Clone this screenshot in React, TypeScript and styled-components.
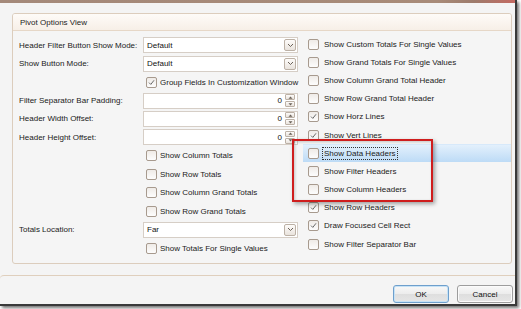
import React from "react";
import styled, { createGlobalStyle, css } from "styled-components";

const GlobalStyle = createGlobalStyle`
  html, body { margin: 0; padding: 0; background: #ffffff; }
  body { font-family: "Liberation Sans", Arial, sans-serif; }
  * { box-sizing: border-box; }
`;

const Page = styled.div`
  position: relative;
  width: 521px;
  height: 309px;
  overflow: hidden;
  background: #ffffff;
`;

const Window = styled.div`
  width: 517px;
  height: 306px;
  background: #f4f4f4;
  border-right: 2px solid #3a3a3a;
  border-bottom: 2px solid #3a3a3a;
  box-shadow: 2px 2px 3px rgba(0, 0, 0, 0.55);
  display: flex;
  flex-direction: column;
`;

const Frame = styled.div`
  height: 3px;
  flex: none;
  background: linear-gradient(to right, #a4897a 0%, #a88b79 85%, #9d7b6c 92%, #c46a62 100%);
`;

const Content = styled.div`
  padding: 10px 3px 0 12px;
`;

const GroupBox = styled.div`
  height: 251px;
  border: 1px solid #dccdbd;
  border-radius: 3px;
  background: #f5f5f5;
  display: flex;
  flex-direction: column;
`;

const GroupHeader = styled.div`
  height: 17px;
  flex: none;
  padding-left: 7px;
  display: flex;
  align-items: center;
  font-size: 8px;
  color: #1c1c1c;
  background: linear-gradient(#fefbf8, #f7efe7);
  border-bottom: 1px solid #e6d7c7;
  border-radius: 2px 2px 0 0;
`;

const GroupBody = styled.div`
  display: grid;
  grid-template-columns: 279px 1fr;
  column-gap: 5px;
  padding-left: 6px;
`;

const LeftColumn = styled.div`
  margin-top: 5px;
  display: grid;
  grid-template-columns: 124px 155px;
  grid-auto-rows: 18.45px;
  align-items: center;
`;

const RightColumn = styled.div`
  margin-top: 4px;
  display: grid;
  grid-auto-rows: 18.2px;
`;

const Label = styled.div`
  font-size: 8px;
  color: #1a1a1a;
  white-space: nowrap;
`;

const Field = styled.div`
  height: 16px;
  background: #ffffff;
  border: 1px solid #d6cec6;
  display: flex;
  align-items: center;
  font-size: 8px;
  color: #111;
`;

const FieldText = styled.div<{ $right?: boolean }>`
  flex: 1;
  padding: 0 3px;
  text-align: ${(p) => (p.$right ? "right" : "left")};
`;

const DropButton = styled.div`
  width: 12px;
  height: 12px;
  margin-right: 1px;
  border: 1px solid #bcb1a6;
  border-radius: 2px;
  background: linear-gradient(#fdfbf9, #e9e3dd);
  display: flex;
  align-items: center;
  justify-content: center;
`;

const SpinButtons = styled.div`
  width: 10px;
  height: 13px;
  margin-right: 2px;
  display: flex;
  flex-direction: column;
  gap: 1px;
`;

const SpinHalf = styled.div`
  flex: 1;
  border: 1px solid #bcb1a6;
  border-radius: 1px;
  background: linear-gradient(#fdfbf9, #e9e3dd);
  display: flex;
  align-items: center;
  justify-content: center;
`;

const CheckRow = styled.div<{ $indent?: number; $selected?: boolean }>`
  display: flex;
  align-items: center;
  gap: 3px;
  padding-left: ${(p) => p.$indent ?? 0}px;
  font-size: 8px;
  color: #1a1a1a;
  white-space: nowrap;
  ${(p) =>
    p.$selected &&
    css`
      background: linear-gradient(#e3f0fc, #bddbf6);
      border-top: 1px solid #d7e9fa;
    `}
`;

const Spanned = styled.div`
  grid-column: 2;
`;

const Box = styled.div`
  width: 11px;
  height: 11px;
  flex: none;
  border: 1px solid #a79a8e;
  border-radius: 2px;
  background: linear-gradient(#efebe7, #fdfdfd);
  display: flex;
  align-items: center;
  justify-content: center;
`;

const Focus = styled.span<{ $focused?: boolean }>`
  padding: 1px 1px;
  border: 1px dotted ${(p) => (p.$focused ? "#333" : "transparent")};
`;

const ButtonBar = styled.div`
  margin-top: 11px;
  flex: 1;
  border-top: 1px solid #dfcfbd;
  border-radius: 4px 0 0 0;
  padding: 9px 2px 0 0;
  display: flex;
  justify-content: flex-end;
  gap: 8px;
`;

const Button = styled.div<{ $primary?: boolean }>`
  width: 56px;
  height: 18px;
  border: 1px solid ${(p) => (p.$primary ? "#6e9fcc" : "#9d9d9d")};
  border-radius: 3px;
  background: linear-gradient(#f8f8f8 0%, #ececec 50%, #dedede 51%, #e6e6e6 100%);
  box-shadow: inset 0 0 0 1px ${(p) => (p.$primary ? "#c6e2f6" : "#fbfbfb")};
  display: flex;
  align-items: center;
  justify-content: center;
  font-size: 8px;
  color: #111;
`;

const Annotation = styled.div`
  position: absolute;
  left: 292px;
  top: 139px;
  width: 141px;
  height: 63px;
  border: 2px solid #cf1d1d;
  box-shadow: 2px 2px 4px rgba(0, 0, 0, 0.35), inset 1px 1px 3px rgba(0, 0, 0, 0.2);
  pointer-events: none;
`;

const Chevron = () => (
  <svg width="7" height="5" viewBox="0 0 7 5">
    <path d="M1 1 L3.5 3.5 L6 1" fill="none" stroke="#6b6259" strokeWidth="1" />
  </svg>
);

const Arrow = ({ up }: { up?: boolean }) => (
  <svg width="5" height="3" viewBox="0 0 5 3">
    <path d={up ? "M0.5 2.8 L2.5 0.5 L4.5 2.8 Z" : "M0.5 0.2 L2.5 2.5 L4.5 0.2 Z"} fill="#6b6259" />
  </svg>
);

const Check = ({ checked }: { checked?: boolean }) => (
  <Box>
    {checked && (
      <svg width="7" height="7" viewBox="0 0 7 7">
        <path d="M1 3.6 L2.8 5.4 L6 1.3" fill="none" stroke="#6a6a6a" strokeWidth="1" />
      </svg>
    )}
  </Box>
);

const Combo = ({ value }: { value: string }) => (
  <Field>
    <FieldText>{value}</FieldText>
    <DropButton>
      <Chevron />
    </DropButton>
  </Field>
);

const Spin = ({ value }: { value: string }) => (
  <Field>
    <FieldText $right>{value}</FieldText>
    <SpinButtons>
      <SpinHalf>
        <Arrow up />
      </SpinHalf>
      <SpinHalf>
        <Arrow />
      </SpinHalf>
    </SpinButtons>
  </Field>
);

type LeftItem =
  | { kind: "combo"; label: string; value: string }
  | { kind: "spin"; label: string; value: string }
  | { kind: "check"; text: string; checked?: boolean };

const leftItems: LeftItem[] = [
  { kind: "combo", label: "Header Filter Button Show Mode:", value: "Default" },
  { kind: "combo", label: "Show Button Mode:", value: "Default" },
  { kind: "check", text: "Group Fields In Customization Window", checked: true },
  { kind: "spin", label: "Filter Separator Bar Padding:", value: "0" },
  { kind: "spin", label: "Header Width Offset:", value: "0" },
  { kind: "spin", label: "Header Height Offset:", value: "0" },
  { kind: "check", text: "Show Column Totals" },
  { kind: "check", text: "Show Row Totals" },
  { kind: "check", text: "Show Column Grand Totals" },
  { kind: "check", text: "Show Row Grand Totals" },
  { kind: "combo", label: "Totals Location:", value: "Far" },
  { kind: "check", text: "Show Totals For Single Values" },
];

const rightItems: { text: string; checked?: boolean; selected?: boolean }[] = [
  { text: "Show Custom Totals For Single Values" },
  { text: "Show Grand Totals For Single Values" },
  { text: "Show Column Grand Total Header" },
  { text: "Show Row Grand Total Header" },
  { text: "Show Horz Lines", checked: true },
  { text: "Show Vert Lines", checked: true },
  { text: "Show Data Headers", selected: true },
  { text: "Show Filter Headers" },
  { text: "Show Column Headers" },
  { text: "Show Row Headers", checked: true },
  { text: "Draw Focused Cell Rect", checked: true },
  { text: "Show Filter Separator Bar" },
];

export default function App() {
  return (
    <>
      <GlobalStyle />
      <Page>
        <Window>
          <Frame />
          <Content>
            <GroupBox>
              <GroupHeader>Pivot Options View</GroupHeader>
              <GroupBody>
                <LeftColumn>
                  {leftItems.map((item, i) => {
                    if (item.kind === "check") {
                      return (
                        <Spanned key={i}>
                          <CheckRow $indent={3}>
                            <Check checked={item.checked} />
                            <span>{item.text}</span>
                          </CheckRow>
                        </Spanned>
                      );
                    }
                    return (
                      <React.Fragment key={i}>
                        <Label>{item.label}</Label>
                        {item.kind === "combo" ? <Combo value={item.value} /> : <Spin value={item.value} />}
                      </React.Fragment>
                    );
                  })}
                </LeftColumn>
                <RightColumn>
                  {rightItems.map((item, i) => (
                    <CheckRow key={i} $indent={5} $selected={item.selected}>
                      <Check checked={item.checked} />
                      <Focus $focused={item.selected}>{item.text}</Focus>
                    </CheckRow>
                  ))}
                </RightColumn>
              </GroupBody>
            </GroupBox>
          </Content>
          <ButtonBar>
            <Button $primary>OK</Button>
            <Button>Cancel</Button>
          </ButtonBar>
        </Window>
        <Annotation />
      </Page>
    </>
  );
}
